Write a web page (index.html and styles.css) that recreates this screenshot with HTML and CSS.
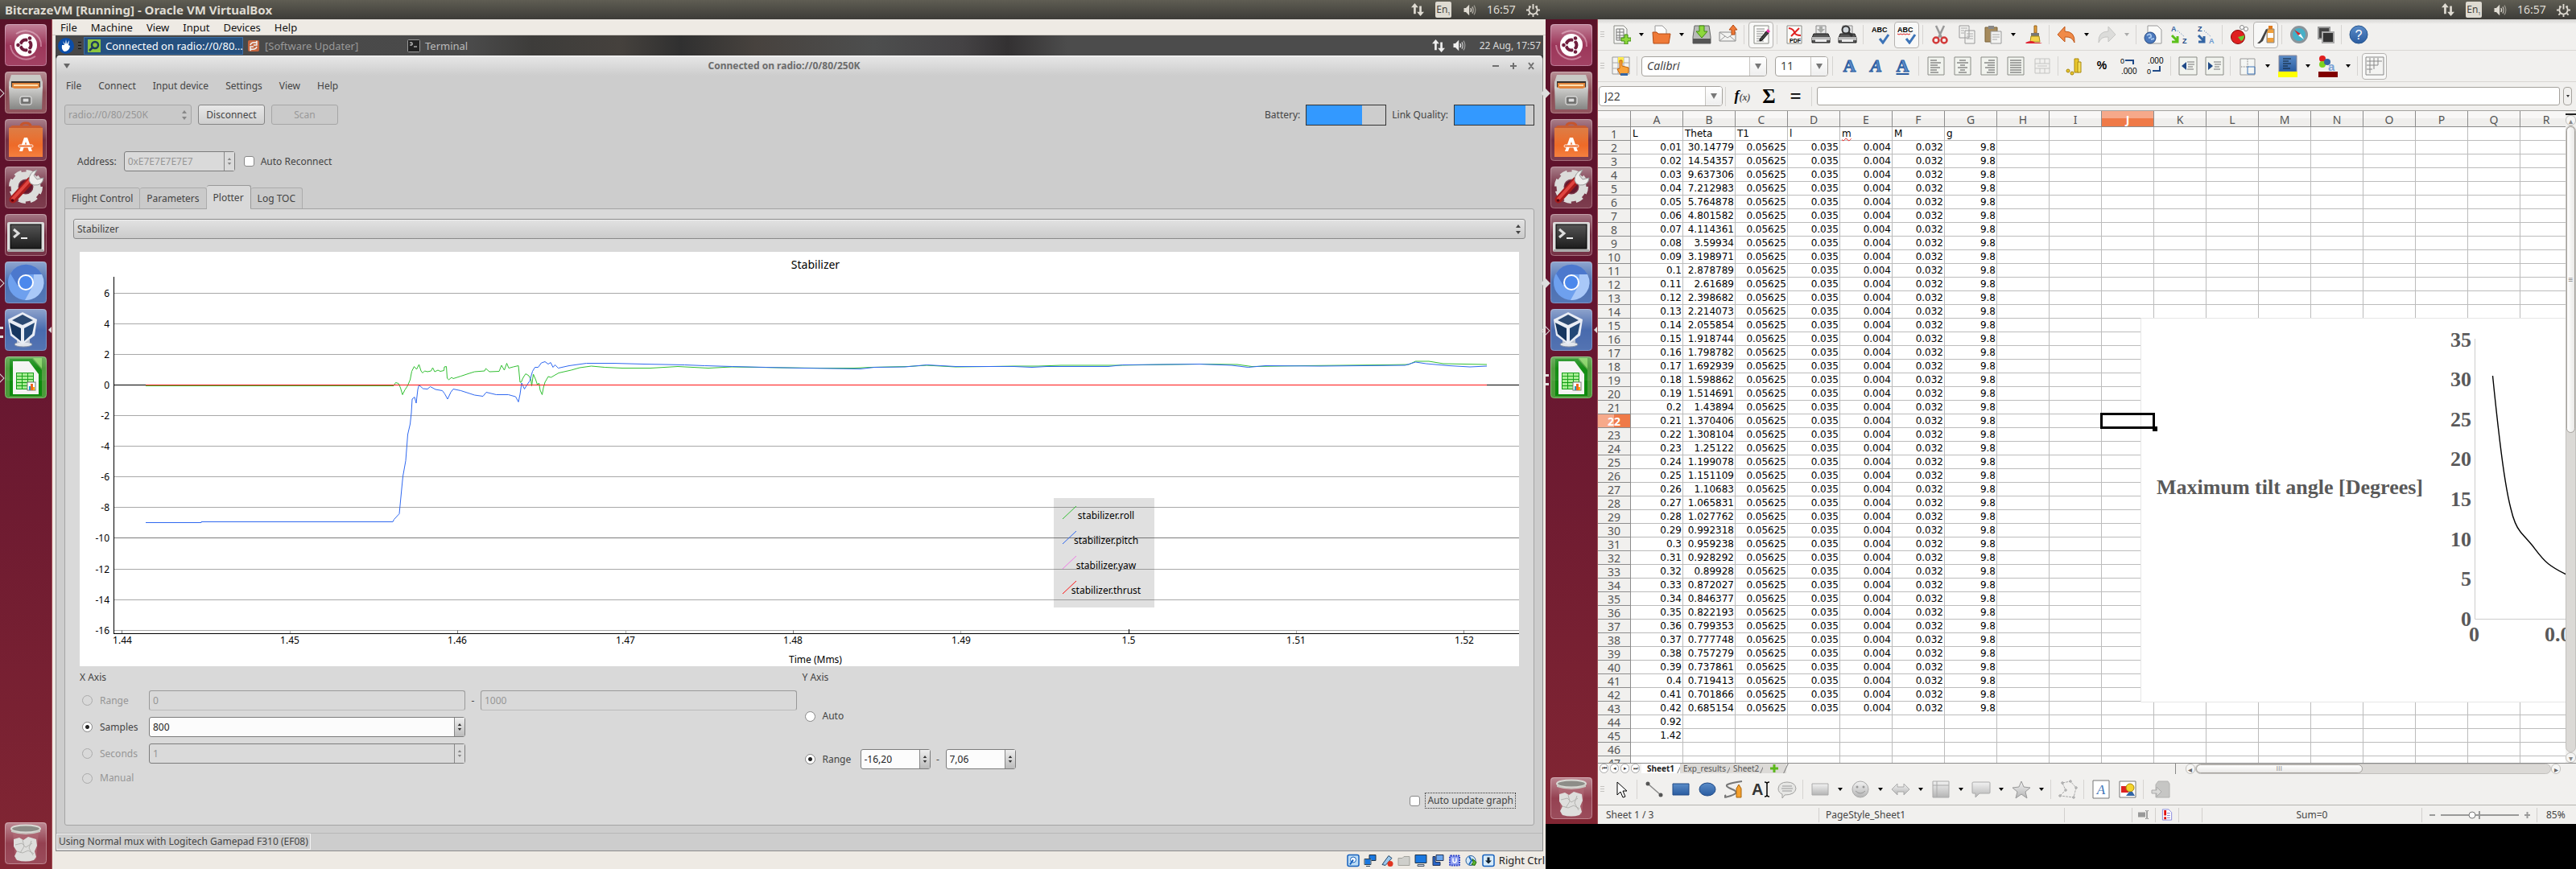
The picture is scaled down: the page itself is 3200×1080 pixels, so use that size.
FILE: index.html
```html
<!DOCTYPE html>
<html lang="en">
<head>
<meta charset="utf-8">
<title>BitcrazeVM [Running] - Oracle VM VirtualBox</title>
<link rel="stylesheet" href="styles.css">
</head>
<body>
<svg class="defs" aria-hidden="true">
  <defs>
    <linearGradient id="gloss" x1="0" y1="0" x2="0" y2="1"><stop offset="0" stop-color="#fff" stop-opacity=".42"/><stop offset=".5" stop-color="#fff" stop-opacity=".06"/><stop offset="1" stop-color="#fff" stop-opacity=".12"/></linearGradient>
    <linearGradient id="metal" x1="0" y1="0" x2="0" y2="1"><stop offset="0" stop-color="#d5d5d3"/><stop offset="1" stop-color="#858583"/></linearGradient>
    <linearGradient id="bag" x1="0" y1="0" x2="0" y2="1"><stop offset="0" stop-color="#dd7d45"/><stop offset=".6" stop-color="#ee6a28"/><stop offset="1" stop-color="#f5803f"/></linearGradient>
    <linearGradient id="dark" x1="0" y1="0" x2="0" y2="1"><stop offset="0" stop-color="#555"/><stop offset="1" stop-color="#1c1c1c"/></linearGradient>
    <linearGradient id="blue" x1="0" y1="0" x2="0" y2="1"><stop offset="0" stop-color="#5a8cc8"/><stop offset="1" stop-color="#2a5ca0"/></linearGradient>
    <linearGradient id="silver" x1="0" y1="0" x2="0" y2="1"><stop offset="0" stop-color="#f2f2f2"/><stop offset="1" stop-color="#b4b4b4"/></linearGradient>
    <symbol id="ubuntu" viewBox="0 0 52 52"><rect x=".5" y=".5" width="51" height="51" rx="4" fill="#96294f" stroke="#b5698a"/><path d="M14 12c14-9 32 0 31 16M38 40C24 49 8 40 7 26" fill="none" stroke="#c1728f" stroke-width="2"/><rect width="52" height="52" rx="4" fill="url(#gloss)"/><circle cx="26" cy="26" r="14" fill="#fff"/><circle cx="26" cy="26" r="6.500" fill="none" stroke="#6f1c3c" stroke-width="4"/><path d="M26 26h-10M26 26l6-10M26 26l6 10" stroke="#fff" stroke-width="1.500"/><g fill="#6f1c3c" stroke="#fff"><circle cx="16.500" cy="26" r="2.800"/><circle cx="31" cy="17.500" r="2.800"/><circle cx="31" cy="34.500" r="2.800"/></g></symbol>
    <symbol id="files" viewBox="0 0 52 52"><rect x=".5" y=".5" width="51" height="51" rx="4" fill="#84404a" stroke="#a8727a"/><rect width="52" height="52" rx="4" fill="url(#gloss)"/><path d="M8 4h36l3 9v8H5v-8z" fill="#c9c9c6"/><path d="M8 12h36v10H8z" fill="#36302c"/><path d="M9 14h34v8H9z" fill="#e0853c"/><path d="M11 17h30" stroke="#ffe0b0" stroke-width="2"/><path d="M5 18l7 3h28l7-3-1 29H6z" fill="url(#metal)"/><rect x="19" y="31" width="14" height="10" rx="2" fill="#7e7e7c" stroke="#eee"/><rect x="22" y="33" width="8" height="5" fill="#ddd" stroke="#555"/></symbol>
    <symbol id="software" viewBox="0 0 52 52"><rect x=".5" y=".5" width="51" height="51" rx="4" fill="#6c2337" stroke="#9a5c6c"/><rect width="52" height="52" rx="4" fill="url(#gloss)"/><path d="M20 16V9q0-4 6-4t6 4v7" fill="none" stroke="#c5552d" stroke-width="3"/><path d="M5 11h42v36H5z" fill="url(#bag)"/><path d="M5 11h42l-4-3H9z" fill="#c75c32"/><path d="M18 40l6-17h4l6 17h-4l-4-12-4 12z" fill="#fff"/><rect x="17" y="32" width="18" height="3" rx="1.500" fill="#ee6a28" stroke="#fff"/></symbol>
    <symbol id="settings" viewBox="0 0 52 52"><rect x=".5" y=".5" width="51" height="51" rx="4" fill="#6c2337" stroke="#9a5c6c"/><rect width="52" height="52" rx="4" fill="url(#gloss)"/><circle cx="26" cy="25" r="17" fill="none" stroke="#dcdcda" stroke-width="8" stroke-dasharray="8 5.350"/><circle cx="26" cy="25" r="14" fill="none" stroke="#dcdcda" stroke-width="9"/><circle cx="26" cy="25" r="8" fill="#64192e"/><path d="M10 41L32 17" stroke="#a81c1c" stroke-width="9" stroke-linecap="round"/><path d="M10 40L31 17" stroke="#e04540" stroke-width="4" stroke-linecap="round"/><path d="M30 17q0-10 10-13l-4 7 4 5 8-2q-1 10-12 9l-4-2z" fill="#ededeb" stroke="#999"/><circle cx="9.500" cy="42" r="1.800" fill="#501"/></symbol>
    <symbol id="terminal" viewBox="0 0 52 52"><rect x=".5" y=".5" width="51" height="51" rx="4" fill="#64192f" stroke="#9a5c6c"/><rect width="52" height="52" rx="4" fill="url(#gloss)"/><rect x="3" y="10" width="46" height="37" rx="2" fill="#ddd"/><rect x="4" y="44" width="44" height="3" fill="#aaa"/><rect x="7" y="13" width="38" height="30" fill="url(#dark)" stroke="#000"/><path d="M11 19l6 5-6 5" fill="none" stroke="#ddd" stroke-width="3"/><path d="M20 30h8" stroke="#eee" stroke-width="2"/></symbol>
    <symbol id="chromium" viewBox="0 0 52 52"><rect x=".5" y=".5" width="51" height="51" rx="4" fill="#3f66ad" stroke="#6d87bb"/><rect width="52" height="52" rx="4" fill="url(#gloss)"/><circle cx="26" cy="26" r="22" fill="#6ea0ee"/><path d="M7 15A22 22 0 0 1 46 16H26L16 30z" fill="#4c78cd"/><path d="M46 16A22 22 0 0 1 25 48l10-18 1-14z" fill="#a9c8f8"/><circle cx="26" cy="26" r="10" fill="#fff"/><circle cx="26" cy="26" r="8" fill="#4b88ec"/></symbol>
    <symbol id="virtualbox" viewBox="0 0 52 52"><rect x=".5" y=".5" width="51" height="51" rx="4" fill="#3d61a8" stroke="#6d87bb"/><rect width="52" height="52" rx="4" fill="url(#gloss)"/><ellipse cx="23" cy="44" rx="11" ry="3" fill="#e3e6ec" stroke="#8d96a8"/><path d="M15 38h16v4H15z" fill="#b9c1d0"/><path d="M22 4l18 9-3 20-15 11L7 33 4 13z" fill="#e9edf5"/><path d="M22 7l13 7-13 6L9 14z" fill="#2c4a72"/><path d="M6 17l14 7v16L9 31z" fill="#17365f"/><path d="M37 17l-13 7v16l10-9z" fill="#234877"/></symbol>
    <symbol id="calc" viewBox="0 0 52 52"><rect x=".5" y=".5" width="51" height="51" rx="4" fill="#4c9a3a" stroke="#7fbb70"/><path d="M6 3h28l12 14v32H6z" fill="#0d8a0d"/><path d="M35 2h11v13z" fill="#7fd05c"/><path d="M10 6h20l12 16v25H10z" fill="#f4f4f2"/><path d="M14 20h22v21H14z" fill="#0f9d12"/><g fill="#a5ec90"><path d="M15 21h6v3h-6zM22 21h6v3h-6zM29 21h6v3h-6zM15 25h6v3h-6zM22 25h6v3h-6zM29 25h6v3h-6zM15 29h6v3h-6zM22 29h6v3h-6zM29 29h6v3h-6zM15 33h6v3h-6zM22 33h6v3h-6zM15 37h6v3h-6zM22 37h6v3h-6z"/></g><rect x="28" y="32" width="10" height="10" fill="#fff" stroke="#777"/><path d="M30 37h2v5h-2z" fill="#29b"/><path d="M32 34h3v8h-3z" fill="#e62"/><path d="M35 38h2v4h-2z" fill="#fa0"/><rect width="52" height="30" rx="4" fill="url(#gloss)" opacity=".5"/></symbol>
    <symbol id="trash" viewBox="0 0 52 52"><rect x=".5" y=".5" width="51" height="51" rx="4" fill="#8e3546" stroke="#b57480"/><rect width="52" height="52" rx="4" fill="url(#gloss)"/><path d="M10 12l3 34q13 4 26 0l3-34z" fill="#b5717c" opacity=".5"/><path d="M11 21l7-2 5 3 6-4 10 3 1 8-3 7 2 7-3 4q-10 3-21 0l-3-5 3-6-4-6z" fill="#dededc"/><path d="M13 28l8-2 5 5 8-5M15 36l7 2 7-3 7 4M22 22l2 8-5 8M33 23l-3 9 5 9" fill="none" stroke="#b3b3b0"/><ellipse cx="26" cy="8" rx="18" ry="4.500" fill="#8d8d88" stroke="#dadad5" stroke-width="2"/><path d="M8 9q18 9 36 0v3q-18 6-36 0z" fill="#c8c8c2"/></symbol>
    <symbol id="net" viewBox="0 0 18 18"><path d="M5 0L0 6h3.500v9h3V6H10zM13 18l5-6h-3.500V4h-3v8H8z" fill="currentColor"/></symbol>
    <symbol id="sound" viewBox="0 0 20 18"><path d="M1 6h3l5-5v16l-5-5H1z" fill="currentColor"/><path d="M11 6q2 3 0 6" fill="none" stroke="currentColor" stroke-width="1.500"/><path d="M13.500 4q3 5 0 10" fill="none" stroke="currentColor" stroke-width="1.500" opacity=".8"/><path d="M16 2q4.500 7 0 14" fill="none" stroke="currentColor" stroke-width="1.500" opacity=".5"/></symbol>
    <symbol id="gear" viewBox="0 0 18 18"><path d="M6 4.300A5.500 5.500 0 1 0 12 4.300" fill="none" stroke="currentColor" stroke-width="2"/><path d="M9 1v7M3.500 3.500l1.500 1.500M14.500 3.500L13 5M0 9h3M18 9h-3M2.500 15.500l2-2M15.500 15.500l-2-2M9 18v-3" stroke="currentColor" stroke-width="2"/></symbol>
    <symbol id="updown" viewBox="0 0 8 14"><path d="M4 1l3 4H1zM4 13l3-4H1z" fill="currentColor"/></symbol>
    <symbol id="page" viewBox="0 0 24 24"><path d="M3 1h18v22H3z" fill="#fcfcfa" stroke="#8a8c86"/></symbol>
    <symbol id="printer" viewBox="0 0 24 24"><path d="M6 1h12v10H6z" fill="#e9e9e9" stroke="#888"/><path d="M3 11h18l2 5v6H1v-6z" fill="#555" stroke="#222"/><path d="M1 15h22v4H1z" fill="#bbb"/><path d="M5 18h14v3H5z" fill="#eee"/></symbol>
  </defs>
</svg>

<main class="desktop">
<section class="screen">
  <header class="topbar">
    <h1 class="topbar-title">BitcrazeVM [Running] - Oracle VM VirtualBox</h1>
    <div class="indicators">
      <svg class="i-net"><use href="#net"/></svg><span class="lang">En<sub>1</sub></span><svg class="i-sound"><use href="#sound"/></svg><time>16:57</time><svg class="i-gear"><use href="#gear"/></svg>
    </div>
  </header>
  <div class="workspace">
    <nav class="launcher" aria-label="Launcher">
      <a href="#" class="tile" aria-label="Dash"><svg><use href="#ubuntu"/></svg></a>
      <a href="#" class="tile hollow" aria-label="Files"><svg><use href="#files"/></svg></a>
      <a href="#" class="tile" aria-label="Ubuntu Software"><svg><use href="#software"/></svg></a>
      <a href="#" class="tile" aria-label="System Settings"><svg><use href="#settings"/></svg></a>
      <a href="#" class="tile" aria-label="Terminal"><svg><use href="#terminal"/></svg></a>
      <a href="#" class="tile hollow" aria-label="Chromium"><svg><use href="#chromium"/></svg></a>
      <a href="#" class="tile pips active" aria-label="VirtualBox"><svg><use href="#virtualbox"/></svg></a>
      <a href="#" class="tile hollow" aria-label="LibreOffice Calc"><svg><use href="#calc"/></svg></a>
      <a href="#" class="tile last" aria-label="Trash"><svg><use href="#trash"/></svg></a>
    </nav>
    <div class="vbox">
      <nav class="vbox-menu"><a href="#">File</a><a href="#">Machine</a><a href="#">View</a><a href="#">Input</a><a href="#">Devices</a><a href="#">Help</a></nav>
      <div class="guest">
        <div class="panel-bar">
          <svg class="mouse" viewBox="0 0 20 20"><circle cx="10" cy="10" r="10" fill="#0b4da8"/><path d="M5 9l3 0-2-5 3 4 1-6 1 6 3-5-1 6 2 1q-1 7-7 7Q4 15 5 9" fill="#fff"/></svg>
          <svg class="grip" viewBox="0 0 4 9"><path d="M0 .5h4M0 4.500h4M0 8.500h4" stroke="#111"/></svg>
          <button class="task task-on"><svg viewBox="0 0 16 16"><path d="M0 0h16v16H0z" fill="#8cc63f"/><circle cx="9" cy="7" r="4" fill="none" stroke="#1e3c5c" stroke-width="2.500"/><path d="M7 9l-5 5" stroke="#1e3c5c" stroke-width="2.500"/></svg>Connected on radio://0/80...</button>
          <button class="task task-idle"><svg viewBox="0 0 16 16"><rect x="1" y="1" width="14" height="14" rx="2" fill="#c4653f"/><path d="M4 7q1-4 7-3l1-2v5H8M12 9q-1 4-7 3l-1 2V9h4" fill="none" stroke="#eee" stroke-width="1.500"/></svg>[Software Updater]</button>
          <button class="task"><svg viewBox="0 0 16 16"><rect x=".5" y=".5" width="15" height="15" rx="1" fill="#222" stroke="#999"/><path d="M3 4h3v3H3M8 9h4" stroke="#eee" fill="none"/></svg>Terminal</button>
          <div class="tray"><svg class="i-net"><use href="#net"/></svg><svg class="i-sound"><use href="#sound"/></svg><time>22 Aug, 17:57</time></div>
        </div>
        <article class="client">
          <header class="client-title"><svg class="roll" viewBox="0 0 8 6"><path d="M0 0h8L4 6z" fill="#666"/></svg><h2>Connected on radio://0/80/250K</h2>
            <svg class="winbtns" viewBox="0 0 54 12"><path d="M1 6h8M23 6h8M27 2v8M46 2l6 8M52 2l-6 8" stroke="#707070" stroke-width="2" fill="none"/></svg></header>
          <nav class="client-menu"><a href="#">File</a><a href="#">Connect</a><a href="#">Input device</a><a href="#">Settings</a><a href="#">View</a><a href="#">Help</a></nav>
          <div class="connect-row">
            <div class="combo combo-uri off"><select aria-label="Interface" disabled><option>radio://0/80/250K</option></select><svg class="arrows"><use href="#updown"/></svg></div>
            <button class="btn">Disconnect</button><button class="btn" disabled>Scan</button>
            <div class="meters">
              <label for="bat">Battery:</label><div class="meter" id="bat" role="meter" aria-valuenow="70"><div class="fill" style="width:70%"></div></div>
              <label for="lq">Link Quality:</label><div class="meter" id="lq" role="meter" aria-valuenow="90"><div class="fill" style="width:90%"></div></div>
            </div>
          </div>
          <div class="address-row">
            <label for="addr">Address:</label>
            <div class="spin spin-addr off"><input id="addr" value="0xE7E7E7E7E7" disabled><svg><use href="#updown"/></svg></div>
            <label class="check"><input type="checkbox">Auto Reconnect</label>
          </div>
          <div class="tabs" role="tablist"><button class="tab" role="tab">Flight Control</button><button class="tab" role="tab">Parameters</button><button class="tab tab-on" role="tab" aria-selected="true">Plotter</button><button class="tab" role="tab">Log TOC</button></div>
          <div class="page">
            <div class="combo"><select aria-label="Log configuration"><option>Stabilizer</option></select><svg class="arrows"><use href="#updown"/></svg></div>
            <div class="page-body">
              <svg class="plot" viewBox="99 313 1788 515" role="img" aria-label="Stabilizer">
                <path d="M99 313h1788v515H99z" fill="#fff"/>
                <g class="gridline"><path d="M142 364.500H1887M142 402.500H1887M142 440.500H1887M142 516.500H1887M142 554.500H1887M142 592.500H1887M142 630.500H1887M142 707.500H1887M142 745.500H1887M142 783.500H1887M360.500 783v5M777.500 783v5M1193.500 783v5M1610.500 783v5"/><path class="gridline-strong" d="M142 668.500H1887M151.500 783v5M568.500 783v5M985.500 783v5M1818.500 783v5"/></g>
                <path class="axis" d="M141.500 344V788M141 787.500H1887M141 478.500H1887M1402.500 782v6"/>
                <path class="roll-line" d="M181 479.500H489L491.500 475.500 495 476.500 497.500 482 500 490.500 503 484.500 506 480 509.500 472 511.500 461.500 514.500 455.500 517.500 459 520.500 453 523 461 525 463.500 527.500 461 531 462 535.500 461 537.500 457 540 462 544 460 547 461.500 551.500 460.500 552 456 554.500 455.500 555.500 470 557.500 472 561 469 563 470.500 572.500 467.500 583 464 589.500 462 602 461 603.500 458 608 462 620 461.500 623 454 626.500 460 629.500 451.500 632 457.500 637.500 456 644 454.500 646 475 647.500 475 649.500 470 653 464.500 657 467 659.500 472 660.500 479.500 662.500 465 665.500 472 667.500 478 669.500 476 671 485 673.500 490.500 675 482 677 475 681 468 684.500 469 694 463.500 709.500 460 720 457 734.500 455 751.500 456.500 773 457.500 808 457.500 842 455.500 880 457.500 909 456 943 456.500 972 457 1018 457.500 1061 457.500 1082 456.500 1128 455.500 1151 454 1187 456 1229 455.500 1260 455 1290 455 1318 454 1390 454 1450 453 1490 452.500 1537 453 1555 455.500 1620 454.500 1719 453.500 1750 453 1758.500 449 1775 449 1793 452 1820 452.500 1847 453"/>
                <path class="pitch-line" d="M181 649.500H250V648.500H488L489.500 645.500 496 638.500 499.500 602 500.500 592 504 572.500 506.500 540 509.500 527 511 513 512 496 515 493.500 517 501 519 484 520.500 478.500 525.500 483 531 483.500 534.500 480.500 541 484 549.500 485.500 552.500 489.500 556 496 560 487.500 563 483.500 572.500 485.500 589.500 491 600 492.500 604 487.500 616.500 490.500 631.500 490.500 640.500 493 644 499.500 646 490 648 476 651.500 483.500 654.500 478.500 658 473.500 661.500 461.500 664.500 456.500 668.500 456.500 672.500 451 677 449.500 681 452.500 684 450.500 687 456.500 689.500 453.500 693.500 457.500 707 454.500 728.500 451.500 762 451.500 800 452.500 850.500 453.500 875.500 454.500 909.500 455.500 951.500 456.500 998 457.500 1069 458.500 1086 456.500 1124 456 1151.500 453.500 1187 455.500 1260 455.500 1282 456.500 1300 455.500 1377 455.500 1394.500 453.500 1490 452.500 1530 454 1550.500 456.500 1572 454.500 1640 455 1745.500 454 1758.500 450 1771.500 452 1800 454.500 1826 456 1847 455"/>
                <path class="thrust-line" d="M181 478.500H1847"/>
                <g class="tick tick-y"><text x="136" y="369">6</text><text x="136" y="407">4</text><text x="136" y="445">2</text><text x="136" y="483">0</text><text x="136" y="521">-2</text><text x="136" y="559">-4</text><text x="136" y="597">-6</text><text x="136" y="635">-8</text><text x="136" y="673">-10</text><text x="136" y="712">-12</text><text x="136" y="750">-14</text><text x="136" y="788">-16</text></g>
                <g class="tick tick-x"><text x="152" y="800">1.44</text><text x="360" y="800">1.45</text><text x="568" y="800">1.46</text><text x="777" y="800">1.47</text><text x="985" y="800">1.48</text><text x="1194" y="800">1.49</text><text x="1402" y="800">1.5</text><text x="1610" y="800">1.51</text><text x="1819" y="800">1.52</text><text x="1013" y="824">Time (Mms)</text><text class="plot-title" x="1013" y="334">Stabilizer</text></g>
                <path d="M1309 619h125v136h-125z" fill="#646464" fill-opacity=".2"/>
                <path class="roll-line" d="M1320 645L1337 629"/><path class="pitch-line" d="M1320 676L1337 660"/><path class="yaw-line" d="M1320 707L1337 691"/><path class="thrust-line" d="M1320 738L1337 722"/>
                <g class="tick tick-x"><text x="1374" y="645">stabilizer.roll</text><text x="1374" y="676">stabilizer.pitch</text><text x="1374" y="707">stabilizer.yaw</text><text x="1374" y="738">stabilizer.thrust</text></g>
              </svg>
              <div class="axes">
                <fieldset class="axis-group" disabled>
                  <legend>X Axis</legend>
                  <div class="axis-row"><label class="radio off"><input type="radio" name="x">Range</label><input class="field x-main off" aria-label="From" value="0"><span class="dash">-</span><input class="field grow off" aria-label="To" value="1000"></div>
                  <div class="axis-row"><label class="radio"><input type="radio" name="x" checked>Samples</label><div class="spin x-main"><input aria-label="Samples" value="800"><svg><use href="#updown"/></svg></div></div>
                  <div class="axis-row"><label class="radio off"><input type="radio" name="x">Seconds</label><div class="spin x-main off"><input aria-label="Seconds" value="1"><svg><use href="#updown"/></svg></div></div>
                  <div class="axis-row"><label class="radio off"><input type="radio" name="x">Manual</label></div>
                </fieldset>
                <fieldset class="axis-group axis-y">
                  <legend>Y Axis</legend>
                  <div class="axis-row"><label class="radio"><input type="radio" name="y">Auto</label></div>
                  <div class="axis-row"><label class="radio radio-y"><input type="radio" name="y" checked>Range</label><div class="spin y-main"><input aria-label="Minimum" value="-16,20"><svg><use href="#updown"/></svg></div><span class="dash">-</span><div class="spin y-main"><input aria-label="Maximum" value="7,06"><svg><use href="#updown"/></svg></div></div>
                </fieldset>
              </div>
              <div class="update-row"><label class="check"><input type="checkbox"><span class="focus">Auto update graph</span></label></div>
            </div>
          </div>
          <footer class="client-status"><span>Using Normal mux with Logitech Gamepad F310 (EF08)</span></footer>
        </article>
      </div>
      <footer class="vbox-status">
        <svg viewBox="0 0 16 16"><rect x="1" y="1" width="14" height="14" rx="2" fill="#bcdcf5" stroke="#1560bd" stroke-width="1.500"/><circle cx="8" cy="7" r="3.500" fill="#fff" stroke="#1560bd"/><path d="M8 7l-4 6" stroke="#1560bd" stroke-width="2"/></svg>
        <svg viewBox="0 0 16 16"><path d="M7 1h8v7H7z" fill="#1a78e0" stroke="#234"/><path d="M1 6h8v7H1z" fill="#1a78e0" stroke="#fff"/><path d="M1 6h8v7H1zM3 15h5" fill="none" stroke="#345"/></svg>
        <svg viewBox="0 0 16 16"><path d="M2 13L10 2l4 3-8 9z" fill="#9cc9ee" stroke="#246"/><circle cx="12" cy="12" r="3.500" fill="#e0341f"/></svg>
        <svg viewBox="0 0 16 16"><path d="M1 5h5l2-2h7v11H1z" fill="#cfcfcb" stroke="#a2a29c"/></svg>
        <svg viewBox="0 0 16 16"><path d="M1 1h14v10H1z" fill="#1a78e0" stroke="#234"/><path d="M4 13h8v2H4z" fill="#dde" stroke="#456"/></svg>
        <svg viewBox="0 0 16 16"><path d="M6 1h9v7H6z" fill="#6aa5ee" stroke="#235"/><path d="M2 3v11h9v-4H5V3z" fill="#2a66c8" stroke="#235"/></svg>
        <svg viewBox="0 0 16 16"><rect x="2" y="2" width="12" height="12" rx="1" fill="#8f9ff0" stroke="#3347c8" stroke-width="2" stroke-dasharray="2 1"/><path d="M6 5v4q2 3 4 0V5" fill="none" stroke="#fff" stroke-width="1.500"/></svg>
        <svg viewBox="0 0 16 16"><circle cx="7" cy="8" r="6" fill="#d6e9f8" stroke="#245c9a"/><path d="M5 3l3 5-3 5" stroke="#1c6ac0" stroke-width="2" fill="none"/><path d="M9 6l5 4-2 4-4-1 2-3z" fill="#5cb531" stroke="#261"/></svg>
        <svg viewBox="0 0 16 16"><rect x="1" y="1" width="14" height="14" rx="2" fill="#d8ecfa" stroke="#1560bd" stroke-width="1.500"/><path d="M6.500 4h3v4H12l-4 4-4-4h2.500z" fill="#123"/></svg>
        <span>Right Ctrl</span>
      </footer>
    </div>
  </div>
</section>

<section class="screen screen-right">
  <header class="topbar">
    <div class="indicators">
      <svg class="i-net"><use href="#net"/></svg><span class="lang">En<sub>1</sub></span><svg class="i-sound"><use href="#sound"/></svg><time>16:57</time><svg class="i-gear"><use href="#gear"/></svg>
    </div>
  </header>
  <div class="workspace">
    <nav class="launcher" aria-label="Launcher">
      <a href="#" class="tile" aria-label="Dash"><svg><use href="#ubuntu"/></svg></a>
      <a href="#" class="tile solid" aria-label="Files"><svg><use href="#files"/></svg></a>
      <a href="#" class="tile" aria-label="Ubuntu Software"><svg><use href="#software"/></svg></a>
      <a href="#" class="tile" aria-label="System Settings"><svg><use href="#settings"/></svg></a>
      <a href="#" class="tile" aria-label="Terminal"><svg><use href="#terminal"/></svg></a>
      <a href="#" class="tile solid" aria-label="Chromium"><svg><use href="#chromium"/></svg></a>
      <a href="#" class="tile hollow active" aria-label="VirtualBox"><svg><use href="#virtualbox"/></svg></a>
      <a href="#" class="tile pips" aria-label="LibreOffice Calc"><svg><use href="#calc"/></svg></a>
      <a href="#" class="tile last" aria-label="Trash"><svg><use href="#trash"/></svg></a>
    </nav>
    <div class="office">
      <div class="toolbar">
        <i class="handle"></i>
        <button aria-label="New"><svg viewBox="0 0 24 24"><path d="M3 1h12l4 4v18H3z" fill="#f6f6f4" stroke="#8a8c86"/><path d="M6 5h9v14H6zM6 9h9M6 13h9M6 16h9M10 5v14" fill="none" stroke="#777"/><path d="M16 12h4v4h4v4h-4v4h-4v-4h-4v-4h4z" fill="#8ed83c" stroke="#3e8a10"/></svg></button><b></b>
        <button aria-label="Open"><svg viewBox="0 0 24 24"><path d="M4 1h9l5 5v8H4z" fill="#fbfbfb" stroke="#999"/><path d="M1 9h5l2 2h15l-2 12H2z" fill="#ef7a38" stroke="#b44a12"/></svg></button><b></b>
        <button aria-label="Save"><svg viewBox="0 0 24 24"><path d="M3 1h18l2 14v8H1v-8z" fill="#b9bbb8" stroke="#666"/><path d="M1 17h22v6H1z" fill="#555"/><path d="M9 1h6v7h4l-7 8-7-8h4z" fill="#8ed83c" stroke="#3e8a10"/></svg></button>
        <button aria-label="Email"><svg viewBox="0 0 24 24"><path d="M1 9h20v11H1z" fill="#f3f3f1" stroke="#888"/><path d="M1 9l10 7 10-7M1 20l7-6M21 20l-7-6" fill="none" stroke="#999"/><path d="M16 12V6h-3l5-6 5 6h-3v6z" fill="#ef7a38" stroke="#b44a12"/></svg></button><s></s>
        <button class="on" aria-label="Edit mode"><svg viewBox="0 0 24 24"><use href="#page"/><path d="M6 5h10M6 8h10M6 11h8M6 14h7M6 17h6M6 20h9" stroke="#888"/><path d="M10 18l8-10 3 2-8 9-3 1z" fill="#444" stroke="#111"/><path d="M18 8l3 2 2-2-3-3z" fill="#e3a"/></svg></button><s></s>
        <button aria-label="Export as PDF"><svg viewBox="0 0 24 24"><use href="#page"/><path d="M5 4q6 1 7 5t8 4M18 4L8 14" stroke="#e02020" stroke-width="2" fill="none"/><text x="6" y="22" font-size="7" font-weight="700">PDF</text></svg></button>
        <button aria-label="Print"><svg viewBox="0 0 24 24"><use href="#printer"/><path d="M10 2h4v3h3l-5 5-5-5h3z" fill="#a9aba8"/></svg></button>
        <button aria-label="Print preview"><svg viewBox="0 0 24 24"><use href="#printer"/><circle cx="10" cy="6" r="4.500" fill="#cfd5da" stroke="#333" stroke-width="2"/><path d="M13 9l5 5" stroke="#333" stroke-width="3"/></svg></button><s></s>
        <button aria-label="Spelling"><svg viewBox="0 0 24 24"><text x="1" y="9" font-size="9" font-weight="700">ABC</text><path d="M11 17l4 5 7-10" fill="none" stroke="#3d74b8" stroke-width="3"/></svg></button>
        <button class="on" aria-label="Automatic spellcheck"><svg viewBox="0 0 24 24"><text x="0" y="9" font-size="9" font-weight="700">ABC</text><path d="M0 11l2 1 2-1 2 1 2-1 2 1 2-1 2 1 2-1" fill="none" stroke="#d22"/><path d="M11 17l4 5 7-10" fill="none" stroke="#3d74b8" stroke-width="3"/></svg></button><s></s>
        <button aria-label="Cut"><svg viewBox="0 0 24 24"><path d="M7 1l7 15M17 1l-7 15" stroke="#999" stroke-width="2.500"/><circle cx="7" cy="19" r="3.500" fill="none" stroke="#d23a3a" stroke-width="2.500"/><circle cx="17" cy="19" r="3.500" fill="none" stroke="#d23a3a" stroke-width="2.500"/></svg></button>
        <button aria-label="Copy"><svg viewBox="0 0 24 24"><path d="M3 1h12v15H3zM10 7h12v16H10z" fill="#f3f3f1" stroke="#999"/><path d="M12 11h8M12 14h8M12 17h8M5 4h8M5 7h4M5 10h4" stroke="#aaa"/></svg></button>
        <button aria-label="Paste"><svg viewBox="0 0 24 24"><path d="M2 3h15v18H2z" fill="#a58a5c" stroke="#7a6238"/><path d="M6 1h7v4H6z" fill="#888"/><path d="M9 8h13v15H9z" fill="#f3f3f1" stroke="#999"/><path d="M11 12h9M11 15h9M11 18h6" stroke="#aaa"/></svg></button><b></b>
        <button aria-label="Clone formatting"><svg viewBox="0 0 24 24"><path d="M13 1h3v9h-3z" fill="#e8a33c" stroke="#94601a"/><path d="M9 10h10v4H9z" fill="#777"/><path d="M9 14h10l1 7H8z" fill="#f3d34a" stroke="#a68a18"/><path d="M2 22q8-4 12 0h9l-3 1H3z" fill="#e02030"/></svg></button><s></s>
        <button aria-label="Undo"><svg viewBox="0 0 24 24"><path d="M10 2v6q13 0 12 14-3-8-12-7v6L1 12z" fill="#f08a48" stroke="#c05a1c"/></svg></button><b></b>
        <button aria-label="Redo"><svg viewBox="0 0 24 24"><path d="M14 2v6Q1 8 2 22q3-8 12-7v6l9-9z" fill="#dcdcda" stroke="#c6c6c4"/></svg></button><b class="dim"></b><s></s>
        <button aria-label="Hyperlink"><svg viewBox="0 0 24 24"><path d="M5 1h12l5 5v17H5z" fill="#fafaf8" stroke="#999"/><circle cx="8" cy="16" r="7" fill="#4b79bd" stroke="#254a85"/><path d="M4 13q4-3 5 0t-3 3M9 18l4-1" stroke="#a5c6ee" stroke-width="2" fill="none"/></svg></button>
        <button aria-label="Sort ascending"><svg viewBox="0 0 24 24"><text x="1" y="8" font-size="9" font-weight="700" fill="#3465a4">A</text><text x="15" y="23" font-size="9" font-weight="700" fill="#204a87">Z</text><path d="M9 7l9 8" stroke="#3465a4" stroke-dasharray="1 2"/><path d="M2 13l6 6M9 14v7H2" stroke="#5cc01a" stroke-width="3" fill="none"/></svg></button>
        <button aria-label="Sort descending"><svg viewBox="0 0 24 24"><text x="1" y="8" font-size="9" font-weight="700" fill="#204a87">Z</text><text x="15" y="23" font-size="9" font-weight="700" fill="#6c9ad0">A</text><path d="M9 7l9 8" stroke="#3465a4" stroke-dasharray="1 2"/><path d="M2 13l6 6M9 14v7H2" stroke="#3465a4" stroke-width="3" fill="none"/></svg></button><s></s>
        <button aria-label="Chart"><svg viewBox="0 0 24 24"><circle cx="10" cy="15" r="8.500" fill="#e02020" stroke="#8a0a0a"/><path d="M10 15l8-2q0 5-4 7z" fill="#6c3"/><circle cx="15" cy="3" r="2.500" fill="#fff" stroke="#888"/><circle cx="20" cy="5" r="2.500" fill="#fff" stroke="#888"/></svg></button>
        <button class="on" aria-label="Gallery"><svg viewBox="0 0 24 24"><path d="M13 5h9v17h-9z" fill="#f1a03a" stroke="#888"/><path d="M14 10h7v6h-7z" fill="#fff"/><path d="M15 1h5v4h-5z" fill="#e07a1c"/><path d="M1 23l4-4 7-14 2 1-6 14-4 3z" fill="#444"/></svg></button><s></s>
        <button aria-label="Navigator"><svg viewBox="0 0 24 24"><circle cx="12" cy="12" r="9.500" fill="#45b0c8" stroke="#8b949a" stroke-width="3"/><path d="M6 6l8 5-3 2z" fill="#d22"/><path d="M18 18l-7-5 3-2z" fill="#fff"/></svg></button>
        <button aria-label="Headers"><svg viewBox="0 0 24 24"><path d="M3 3h14v14H3z" fill="#444" stroke="#999" stroke-width="2"/><path d="M8 9h14v13H8z" fill="#333" stroke="#aaa" stroke-width="2"/></svg></button><s></s>
        <button aria-label="Help"><svg viewBox="0 0 24 24"><circle cx="12" cy="12" r="11" fill="url(#blue)" stroke="#27568f"/><text x="12" y="18" font-size="16" text-anchor="middle" fill="#fff">?</text></svg></button>
      </div>
      <div class="toolbar">
        <i class="handle"></i>
        <button aria-label="Styles"><svg viewBox="0 0 24 24"><path d="M1 1h21v21H1z" fill="#f4f4f2" stroke="#999"/><path d="M1 8h21M1 15h21M8 1v21M15 1v21" stroke="#aaa"/><path d="M8 1h7v7H8z" fill="#fce94f"/><path d="M10 5h3v7l8 2v6l-3 3h-7l-4-7 3-1z" fill="#f9a33a" stroke="#c2630a"/><path d="M11 21h9v3h-9z" fill="#3465a4"/></svg></button><s></s>
        <div class="cbx cbx-font"><input aria-label="Font name" value="Calibri"><button aria-label="Fonts"></button></div>
        <div class="cbx cbx-size"><input aria-label="Font size" value="11"><button aria-label="Sizes"></button></div><s></s>
        <button class="letter" aria-label="Bold"><span>A</span></button><button class="letter" aria-label="Italic"><em>A</em></button><button class="letter" aria-label="Underline"><u>A</u></button><s></s>
        <button aria-label="Align left"><svg viewBox="0 0 24 24"><path d="M2 1h20v22H2z" fill="#f1f3ee" stroke="#8a8c86"/><path d="M5 5h8M5 8h13M5 11h9M5 14h12M5 17h8M5 20h10" stroke="#555"/></svg></button>
        <button aria-label="Center"><svg viewBox="0 0 24 24"><path d="M2 1h20v22H2z" fill="#f1f3ee" stroke="#8a8c86"/><path d="M8 5h8M5 8h14M9 11h6M6 14h12M9 17h6M7 20h10" stroke="#555"/></svg></button>
        <button aria-label="Align right"><svg viewBox="0 0 24 24"><path d="M2 1h20v22H2z" fill="#f1f3ee" stroke="#8a8c86"/><path d="M11 5h8M6 8h13M10 11h9M7 14h12M11 17h8M9 20h10" stroke="#555"/></svg></button>
        <button aria-label="Justify"><svg viewBox="0 0 24 24"><path d="M2 1h20v22H2z" fill="#f1f3ee" stroke="#8a8c86"/><path d="M5 5h14M5 8h14M5 11h14M5 14h14M5 17h14M5 20h14" stroke="#555"/></svg></button>
        <button aria-label="Merge cells"><svg viewBox="0 0 24 24"><path d="M3 3h18v18H3zM3 9h18M3 15h18M9 3v6M15 3v6M9 15v6M15 15v6M6 12h12" fill="none" stroke="#c4c4c2"/></svg></button><s></s>
        <button aria-label="Currency"><svg viewBox="0 0 24 24"><path d="M11 3h5v17h-5z" fill="#e9c72c" stroke="#a8860c"/><path d="M15 7h4v13h-4z" fill="#f5df5a" stroke="#a8860c"/><circle cx="3" cy="18" r="2" fill="#e9c72c" stroke="#a8860c"/><circle cx="8" cy="21" r="2" fill="#e9c72c" stroke="#a8860c"/></svg></button>
        <button aria-label="Percent"><svg viewBox="0 0 24 24"><text x="12" y="16" font-size="14" font-weight="700" text-anchor="middle">%</text></svg></button>
        <button aria-label="Add decimal"><svg viewBox="0 0 24 24"><text x="2" y="9" font-size="9">0</text><text x="3" y="22" font-size="10">.000</text><path d="M8 5h10v5" fill="none" stroke="#204a87" stroke-width="2"/></svg></button>
        <button aria-label="Remove decimal"><svg viewBox="0 0 24 24"><text x="3" y="9" font-size="10">.000</text><text x="2" y="22" font-size="9">0</text><path d="M18 12v6H9" fill="none" stroke="#204a87" stroke-width="2"/></svg></button><s></s>
        <button aria-label="Decrease indent"><svg viewBox="0 0 24 24"><path d="M1 1h22v22H1z" fill="#f1f3ee" stroke="#8a8c86"/><path d="M10 7l-6 5 6 5z" fill="#204a87"/><path d="M11 7h9M12 10h8M12 13h6M11 16h8" stroke="#777"/></svg></button>
        <button aria-label="Increase indent"><svg viewBox="0 0 24 24"><path d="M1 1h22v22H1z" fill="#f1f3ee" stroke="#8a8c86"/><path d="M4 7l6 5-6 5z" fill="#204a87"/><path d="M11 7h9M12 10h8M12 13h6M11 16h8" stroke="#777"/></svg></button><s></s>
        <button aria-label="Borders"><svg viewBox="0 0 24 24"><path d="M3 3h18v20H3z" fill="#f4f6f4" stroke="#999"/><path d="M12 4v10M4 13h9" stroke="#777" stroke-dasharray="1 1"/><path d="M12 13h9v9h-9z" fill="none" stroke="#3d74b8"/></svg></button><b></b>
        <button aria-label="Background color"><svg viewBox="0 0 24 28"><path d="M1 1h22v20H1z" fill="url(#blue)" stroke="#889"/><path d="M6 5h10M6 8h7M6 11h10M6 14h6M6 17h9" stroke="#123"/><path d="M0 21h24v7H0z" fill="#ff0"/></svg></button><b></b>
        <button aria-label="Font color"><svg viewBox="0 0 24 28"><circle cx="5" cy="5" r="4" fill="#e02020"/><circle cx="5" cy="12" r="4" fill="#7ed321"/><circle cx="11" cy="9" r="4" fill="#3465a4"/><text x="12" y="20" font-size="15" font-weight="700" fill="#7aa2d6">a</text><path d="M0 21h24v7H0z" fill="#800000"/></svg></button><b></b><s></s>
        <button class="on" aria-label="Grid lines"><svg viewBox="0 0 24 24"><path d="M1 1h22v22H1z" fill="#f4f4f2" stroke="#888"/><path d="M2 6h19M2 11h14M2 16h7M6 2v19M11 2v14M16 2v9" stroke="#888"/></svg></button>
      </div>
      <div class="formula">
        <div class="cbx cbx-name"><input aria-label="Name box" value="J22"><button aria-label="Names"></button></div><s></s>
        <button class="fx" aria-label="Function wizard"><em>f</em><small>(x)</small></button><button class="sigma" aria-label="Sum">Σ</button><button class="sigma" aria-label="Formula">=</button><s></s>
        <input class="formula-line" aria-label="Input line"><button class="expand" aria-label="Expand formula bar"></button>
      </div>
      <div class="sheet">
        <div class="grid">
          <table><thead></thead><tbody></tbody></table>
          <div class="chart">
            <svg viewBox="2659 395 528 478" width="528" height="478" role="img" aria-label="Maximum tilt angle">
              <path d="M2659.500 395.500h600v477h-600z" fill="#fff" stroke="#e6e6e6"/>
              <path d="M3074.500 421V769.500H3188" fill="none" stroke="#ccc"/>
              <path d="M3096.500 467C3099 492 3102 520 3105 545S3112 605 3119 632C3122 645 3126 655 3131 661C3135 666 3140 671 3145 677S3157 694 3166 701S3180 710 3190 715" fill="none" stroke="#000" stroke-width="1.400"/>
              <g class="chart-text"><text x="3070" y="431">35</text><text x="3070" y="480">30</text><text x="3070" y="530">25</text><text x="3070" y="579">20</text><text x="3070" y="629">15</text><text x="3070" y="679">10</text><text x="3070" y="728">5</text><text x="3070" y="778">0</text><text x="3080" y="797">0</text><text x="3010" y="614">Maximum tilt angle [Degrees]</text></g>
              <text class="chart-text chart-start" x="3161" y="797">0.05</text>
            </svg>
          </div>
          <div class="cursor"></div>
        </div>
        <div class="vscroll"><i class="split"></i><button aria-label="Scroll up">▴</button><div class="vtrack"><div class="vthumb">≡</div></div><button aria-label="Scroll down">▾</button></div>
      </div>
      <div class="sheet-tabs">
        <div class="tab-nav"><button aria-label="First sheet">⏮</button><button aria-label="Previous sheet">◂</button><button aria-label="Next sheet">▸</button><button aria-label="Last sheet">⏭</button></div>
        <div class="tab-list"><button class="stab stab-on">Sheet1</button><button class="stab">Exp_results</button><button class="stab">Sheet2</button><button class="stab stab-add" aria-label="Add sheet"><svg viewBox="0 0 10 10"><path d="M3.500 0h3v3.500H10v3H6.500V10h-3V6.500H0v-3h3.500z" fill="#5cb81c"/></svg></button></div>
        <div class="hscroll"><button aria-label="Scroll left">◂</button><div class="htrack"><div class="hthumb">ııı</div></div><button aria-label="Scroll right">▸</button></div>
      </div>
      <div class="toolbar drawbar">
        <i class="handle"></i>
        <button aria-label="Select"><svg viewBox="0 0 24 24"><path d="M7 3v16l4-4 3 7 3-1-3-7h5z" fill="#fff" stroke="#000"/></svg></button><s></s>
        <button aria-label="Line"><svg viewBox="0 0 24 24"><path d="M4 5l16 14" stroke="#888" stroke-width="1.500"/><circle cx="4" cy="5" r="2.500" fill="#555"/><circle cx="20" cy="19" r="2.500" fill="#555"/></svg></button>
        <button aria-label="Rectangle"><svg viewBox="0 0 24 24"><path d="M2 5h20v14H2z" fill="url(#blue)" stroke="#204a87"/></svg></button>
        <button aria-label="Ellipse"><svg viewBox="0 0 24 24"><ellipse cx="12" cy="12" rx="10" ry="8" fill="url(#blue)" stroke="#204a87"/></svg></button>
        <button aria-label="Freeform"><svg viewBox="0 0 24 24"><path d="M22 2q-14 2-18 4t6 6-2 8-6-1" fill="none" stroke="#777" stroke-width="2"/><path d="M15 22V11l3-5 3 5v11z" fill="#f5a02c" stroke="#a8650c"/></svg></button>
        <button aria-label="Text"><svg viewBox="0 0 24 24"><text x="1" y="19" font-size="20" font-weight="700" fill="#333">A</text><path d="M17 3q3 0 3 2v14q0 2-3 2M23 3q-3 0-3 2v14q0 2 3 2" fill="none" stroke="#000" stroke-width="1.500"/></svg></button>
        <button aria-label="Callout"><svg viewBox="0 0 24 24"><path d="M9 19L6 23v-5Q1 16 1 11q1-8 11-8t11 8q-1 8-14 8z" fill="#e6e6e4" stroke="#a2a2a0"/><path d="M6 8h12M5 11h14M6 14h12" stroke="#999"/></svg></button><s></s>
        <button aria-label="Basic shapes"><svg viewBox="0 0 24 24"><path d="M2 5h20v14H2z" fill="url(#silver)" stroke="#aaa"/></svg></button><b></b>
        <button aria-label="Symbol shapes"><svg viewBox="0 0 24 24"><circle cx="12" cy="12" r="10" fill="url(#silver)" stroke="#aaa"/><circle cx="8" cy="9" r="1.500" fill="#999"/><circle cx="16" cy="9" r="1.500" fill="#999"/><path d="M6 14q6 6 12 0" fill="none" stroke="#999"/></svg></button><b></b>
        <button aria-label="Block arrows"><svg viewBox="0 0 24 24"><path d="M1 12l7-7v4h8V5l7 7-7 7v-4H8v4z" fill="url(#silver)" stroke="#aaa"/></svg></button><b></b>
        <button aria-label="Flowchart"><svg viewBox="0 0 24 24"><path d="M2 2h20v20H2z" fill="url(#silver)" stroke="#aaa"/><path d="M7 2v20M2 7h20" stroke="#aaa"/></svg></button><b></b>
        <button aria-label="Callouts"><svg viewBox="0 0 24 24"><path d="M3 3h19q1 0 1 1v12q0 1-1 1H10l-5 5v-5H2q-1 0-1-1V4q0-1 2-1z" fill="url(#silver)" stroke="#aaa"/></svg></button><b></b>
        <button aria-label="Stars"><svg viewBox="0 0 24 24"><path d="M12 2l3 7 8 1-6 5 2 8-7-5-7 5 2-8-6-5 8-1z" fill="url(#silver)" stroke="#999"/></svg></button><b></b><s></s>
        <button aria-label="Points"><svg viewBox="0 0 24 24"><path d="M2 20l7-7-4-9 10-2 7 8-3 12z" fill="none" stroke="#aaa" stroke-dasharray="3 1"/><path d="M1 19h2v2H1zM8 12h2v2H8zM4 3h2v2H4zM14 1h2v2h-2zM21 9h2v2h-2zM18 21h2v2h-2z" fill="#fff" stroke="#999"/></svg></button><s></s>
        <button aria-label="Fontwork"><svg viewBox="0 0 24 24"><path d="M2 1h20v22H2z" fill="#fff" stroke="#777"/><text x="12" y="18" font-size="17" font-style="italic" text-anchor="middle" font-family="Liberation Serif, serif" fill="#3d74b8">A</text></svg></button>
        <button aria-label="From file"><svg viewBox="0 0 24 24"><path d="M2 2h20v20H2z" fill="#fff" stroke="#777"/><path d="M4 8h9v8H4z" fill="#d22"/><circle cx="15" cy="10" r="5" fill="#f5d52c" stroke="#a8860c"/><path d="M10 20l4-5h4l3 5z" fill="#3465a4"/></svg></button><s></s>
        <button aria-label="Extrusion"><svg viewBox="0 0 24 24"><path d="M6 6l3-4h12l2 3v17H6z" fill="#c6c6c4" stroke="#b2b2b0"/><path d="M1 13h6v-4l6 6-6 6v-4H1z" fill="#d9d9d7" stroke="#aaa"/></svg></button>
      </div>
      <footer class="office-status">
        <span class="st-sheet">Sheet 1 / 3</span><span class="st-style">PageStyle_Sheet1</span><span class="st-lang"></span><span class="st-icon"><svg viewBox="0 0 14 14"><path d="M0 4h9v6H0z" fill="#999"/><path d="M9 2q2 0 2 1v8q0 1-2 1M13 2q-2 0-2 1v8q0 1 2 1" fill="none" stroke="#888"/></svg></span><span class="st-icon"><svg viewBox="0 0 14 16"><path d="M1 1h8l4 4v10H1z" fill="#fff" stroke="#88d"/><path d="M7 6h4M7 9h4M7 12h4" stroke="#77c"/><path d="M3 2h3v7H3zM3 11h3v3H3z" fill="#e01010"/></svg></span><span class="st-sign"></span><span class="st-sum">Sum=0</span>
        <span class="st-zoom"><svg viewBox="0 0 126 12"><path d="M1 6h7M15 6h97M119 6h7M122.500 2v8M63 1v10" stroke="#999" stroke-width="2"/><circle cx="54" cy="6" r="4" fill="#fff" stroke="#777"/></svg></span><span class="st-pct">85%</span>
      </footer>
    </div>
  </div>
</section>
</main>
<script src="sheet.js"></script>
</body>
</html>
```
FILE: styles.css
```css
* { box-sizing: border-box; }
body { margin: 0; background: #000; font: 13px/16px "Noto Sans", "Open Sans", sans-serif; color: #222; }
h1, h2 { margin: 0; font-size: inherit; }
a { color: inherit; text-decoration: none; }
button, input, select { font: inherit; color: inherit; margin: 0; padding: 0; border: 0; background: none; min-width: 0; outline: 0; }
svg { display: block; flex: none; }
.defs { position: absolute; width: 0; height: 0; }

.desktop { display: flex; height: 100vh; overflow: hidden; }
.screen { flex: 3; min-width: 0; display: flex; flex-direction: column; }
.screen-right { flex: 2; height: calc(100vh - 56px); }
.topbar { height: 24px; flex: none; display: flex; align-items: center; padding: 0 7px 0 6px; background: linear-gradient(#5f5d53, #3d3c38); color: #dfdbd2; }
.topbar-title { font-size: 15px; }
.indicators { margin-left: auto; display: flex; align-items: center; }
.indicators time { margin: 0 12px 0 11px; width: 37px; font-size: 14px; }
.i-net { width: 18px; height: 16px; }
.i-sound { width: 20px; height: 15px; }
.i-gear { width: 17px; height: 17px; }
.lang { width: 20px; height: 20px; margin: 0 13px; border-radius: 2px; background: #dfdbd2; color: #44423c; font-size: 12px; line-height: 20px; text-align: center; }
.lang sub { font-size: 6px; }
.workspace { flex: 1; min-height: 0; display: flex; }

.launcher { width: 65px; flex: none; display: flex; flex-direction: column; gap: 7px; padding: 6px 6px 6px 0; background: linear-gradient(#5a1128, #641530 35%, #822633); border-right: 1px solid #a34f55; }
.tile { position: relative; display: block; width: 58px; height: 52px; padding-left: 6px; }
.tile svg { width: 52px; height: 52px; }
.last { margin-top: auto; }
.hollow::before, .solid::before { content: ""; position: absolute; left: -4px; top: 23px; width: 6px; height: 6px; border: 1px solid #ddd; transform: rotate(45deg); }
.solid::before { background: #ddd; }
.pips::before { content: ""; position: absolute; left: 0; top: 22px; width: 4px; height: 8px; border: solid #ddd; border-width: 3px 0; }
.active::after { content: ""; position: absolute; right: -6px; top: 22px; border: 4px solid transparent; border-right-color: #ddd; border-left: 0; }

.vbox { flex: 1; min-width: 0; display: flex; flex-direction: column; background: #eeeae4; }
.vbox-menu { height: 20px; flex: none; display: flex; align-items: center; gap: 17px; padding-left: 10px; border-bottom: 1px solid #cfcbc4; color: #111; }
.guest { flex: 1; min-height: 0; margin: 0 3px 0 4px; display: flex; flex-direction: column; background: #2e2e2e; font-size: 12px; color: #444; }
.panel-bar { height: 25px; flex: none; display: flex; align-items: center; padding: 0 3px; background: linear-gradient(90deg, #484848 0, #4a4a4a 28%, #3d3c3a 32%, #45413d 38%, #303030 42%, #47423e 47%, #4d4e4e 55%, #444244 61%, #333132 64%, #4c4c4c 68%, #4c4c4c); color: #ddd; }
.mouse { width: 20px; height: 20px; }
.grip { width: 4px; height: 9px; margin: 0 3px 0 5px; }
.task { width: 198px; height: 22px; display: flex; align-items: center; gap: 6px; padding: 0 4px; margin-right: 1px; white-space: nowrap; color: #bbb; font-size: 13px; }
.task svg { width: 16px; height: 16px; }
.task-on { background: #25507f; border: 1px solid #3c6ea5; color: #fff; }
.task-idle { color: #999; }
.tray { margin-left: auto; display: flex; align-items: center; gap: 7px; color: #eee; }
.tray time { margin-left: 8px; font-size: 12px; color: #ddd; }

.client { flex: 1; min-height: 0; display: flex; flex-direction: column; background: linear-gradient(#e6e6e6, #cdcdcd 24px); border: 1px solid #8c8c8c; border-top-color: #fff; border-radius: 5px 5px 0 0; }
.client-title { height: 24px; flex: none; display: flex; align-items: center; padding: 0 9px; font-weight: 700; color: #6c6c6c; }
.client-title h2 { flex: 1; text-align: center; padding-right: 0; padding-left: 46px; margin-right: 0; }
.roll { width: 8px; height: 6px; }
.winbtns { width: 54px; height: 12px; }
.client-title h2 { padding: 0 0 0 8px; }
.client-menu { height: 26px; flex: none; display: flex; align-items: center; gap: 21px; padding-left: 12px; }
.connect-row { display: flex; align-items: center; height: 25px; margin: 10px 10px 0; gap: 8px; flex: none; }
.combo { height: 25px; display: flex; align-items: center; border: 1px solid #8a8a8a; border-radius: 3px; background: linear-gradient(#e2e2e2, #cbcbcb); padding: 0 4px; box-shadow: inset 0 1px #eee; }
.combo select { flex: 1; appearance: none; height: 23px; opacity: 1; }
.combo-uri { width: 158px; }
.arrows { width: 8px; height: 14px; color: #444; }
.off { color: #969696 !important; }
.combo.off { border-color: #a6a6a6; background: #c9c9c9; box-shadow: none; }
.off svg { color: #888; }
.btn { width: 83px; height: 25px; border: 1px solid #858585; border-radius: 3px; background: linear-gradient(#e8e8e8, #cfcfcf); }
.btn:disabled { color: #999; border-color: #a6a6a6; background: #cacaca; }
.meters { margin-left: auto; display: flex; align-items: center; gap: 7px; }
.meter { width: 100px; height: 26px; border: 1px solid #333; }
.fill { height: 100%; background: #3399ff; }
.address-row { display: flex; align-items: center; height: 25px; margin: 33px 0 0 26px; gap: 9px; flex: none; }
.spin { height: 25px; display: flex; border: 1px solid #7c7c7c; border-radius: 3px; background: #fcfcfc; color: #222; }
.spin input { flex: 1; padding-left: 4px; }
.spin svg { width: 13px; height: 23px; padding: 3px; border-left: 1px solid #888; background: linear-gradient(#eee, #bbb); color: #333; }
.spin.off, .spin.off svg { background: #dadada; color: #888; }
.spin-addr { width: 138px; }
.check { display: flex; align-items: center; gap: 8px; }
.check input { appearance: none; width: 13px; height: 13px; border: 1px solid #888; border-radius: 3px; background: #fff; margin: 0 0 0 2px; }
.tabs { display: flex; align-items: flex-end; height: 30px; margin: 17px 10px 0; flex: none; }
.tab { height: 27px; padding: 0 8px; border: 1px solid #acacac; border-left-width: 0; border-radius: 3px 3px 0 0; background: #cacaca; line-height: 25px; }
.tab:first-child { border-left-width: 1px; }
.tab-on { height: 30px; background: #d9d9d9; border-color: #999 #999 #d9d9d9; }
.page { flex: 1; min-height: 0; margin: -1px 10px 9px; padding: 12px 10px 0; border: 1px solid #a4a4a4; border-radius: 0 3px 3px 3px; background: #d9d9d9; }
.tab-on { position: relative; }
.page-body { margin: 16px 8px 0; }
.plot { width: 100%; height: auto; font-size: 12px; }
.plot path { fill: none; }
.plot > path:first-child { fill: #fff; }
.plot path[fill-opacity] { fill: #646464; }
.gridline { stroke: #a8a8a8; }
.gridline-strong { stroke: #7c7c7c; }
.axis { stroke: #000; }
.roll-line { stroke: #33c033; }
.pitch-line { stroke: #2f68f0; }
.yaw-line { stroke: #f07ae6; }
.thrust-line { stroke: #ff1414; }
.tick { fill: #000; }
.tick-y { text-anchor: end; }
.tick-x { text-anchor: middle; }
.plot-title { font-size: 14px; }
.axes { display: flex; gap: 7px; margin-top: 6px; }
.axis-group { flex: 1; min-width: 0; border: 0; margin: 0; padding: 0; display: flex; flex-direction: column; gap: 8px; }
.axis-group legend { padding: 0; height: 24px; }
.axis-y { gap: 31px; }
.axis-y .axis-row:first-of-type { margin-top: 22px; }
.axis-row { display: flex; align-items: center; min-height: 20px; }
.axis-row .x-main { width: 393px; }
.axis-row .y-main { width: 87px; }
.axis-row:has(.x-main), .axis-row:has(.y-main) { height: 25px; }
.field { height: 25px; border: 1px solid #999; border-radius: 3px; border-bottom-color: #bbb; padding: 0 4px; }
.grow { flex: 1; }
.dash { width: 19px; text-align: center; }
.radio { width: 86px; display: flex; align-items: center; gap: 9px; }
.radio-y { width: 72px; }
.radio input { appearance: none; width: 13px; height: 13px; margin-left: 3px; border: 1px solid #888; border-radius: 50%; background: #fff; }
.radio.off input { background: none; border-color: #aaa; }
.radio input:checked { background: radial-gradient(circle, #222 0 2px, #fff 3px); }
.update-row { display: flex; justify-content: flex-end; margin-top: 8px; padding-right: 4px; }
.focus { border: 1px dotted #333; padding: 1px 2px; }
.update-row .check { gap: 6px; }
.client-status { height: 22px; flex: none; border-top: 1px solid #b8b8b8; }
.client-status span { display: inline-block; border: 1px solid #f2f2f2; padding: 0 2px; line-height: 18px; }
.vbox-status { height: 22px; flex: none; display: flex; align-items: center; justify-content: flex-end; gap: 5px; padding-right: 1px; color: #222; }
.vbox-status svg { width: 16px; height: 17px; }
.vbox-status span { font-size: 13px; }

.office { flex: 1; min-width: 0; display: flex; flex-direction: column; background: #f1f0ee; }
.toolbar { height: 39px; flex: none; display: flex; align-items: center; border-bottom: 1px solid #d9d7d4; }
.toolbar:first-child { background: linear-gradient(#d5d4d2, #f1f0ee 6px); }
.toolbar > button { width: 31px; height: 33px; margin: 0 1px; display: flex; align-items: center; justify-content: center; flex: none; }
.toolbar > button svg { width: 24px; height: 24px; font-family: "Liberation Sans", sans-serif; }
.toolbar > button svg[viewBox="0 0 24 28"] { height: 28px; }
.toolbar > .on { border: 1px solid #b5b3b0; border-radius: 4px; background: #f8f8f7; }
.handle { width: 12px; height: 9px; flex: none; background: repeating-linear-gradient(#c4c2bf 0 1px, transparent 1px 3px) 3px 0 / 5px 9px no-repeat; }
.toolbar b { width: 17px; flex: none; }
.toolbar b::after { content: ""; display: block; width: 0; margin: auto; border: 3px solid transparent; border-top: 4px solid #000; border-bottom: 0; }
.toolbar .dim::after { border-top-color: #aaa; }
.toolbar s, .formula s { width: 1px; height: 24px; margin: 0 4px 0 3px; background: #d6d4d1; flex: none; }
.cbx { display: flex; flex: none; height: 25px; border: 1px solid #a5a29d; border-radius: 4px; background: #fff; color: #444; }
.cbx input { flex: 1; padding-left: 6px; font-size: 14px; }
.cbx button { width: 21px; border-left: 1px solid #c6c4c0; background: linear-gradient(#fff, #eee); border-radius: 0 3px 3px 0; }
.cbx button::after { content: ""; display: block; width: 0; margin: auto; border: 4px solid transparent; border-top: 7px solid #777; border-bottom: 0; }
.cbx-font { width: 156px; margin: 0 10px 0 1px; font-style: italic; }
.cbx-size { width: 66px; margin-right: 2px; }
.cbx-name { width: 154px; }
.toolbar > .letter { font: 700 22px/26px "Liberation Serif", serif; color: #5b8ccb; -webkit-text-stroke: 1px #2a5ca0; }
.formula { height: 36px; flex: none; display: flex; align-items: center; padding: 0 5px 0 1px; border-bottom: 1px solid #a4a29f; }
.formula > button { width: 33px; color: #000; }
.formula .fx { font: 700 18px/20px "Liberation Serif", serif; }
.fx small { font-size: 12px; font-style: italic; color: #555; }
.formula .sigma { font: 700 25px/24px "Liberation Serif", serif; }
.formula .formula-line { flex: 1; height: 23px; border: 1px solid #a5a29d; border-radius: 3px; background: #fff; margin-left: 2px; }
.formula .expand { width: 11px; height: 23px; margin-left: 4px; border: 1px solid #a5a29d; border-radius: 4px; }
.expand::after { content: ""; display: block; width: 0; margin: auto; border: 2px solid transparent; border-top: 3px solid #333; border-bottom: 0; }

.sheet { flex: 1; min-height: 0; display: flex; border-bottom: 1px solid #8c8c8c; }
.grid { position: relative; flex: 1; min-width: 0; overflow: hidden; background: #fff; }
.grid table { width: 1211px; table-layout: fixed; border-collapse: separate; border-spacing: 0; font: 12px/15px "DejaVu Sans", sans-serif; color: #000; }
.grid th, .grid td { height: 17px; padding: 1px 1px 0 2px; border: solid #bcbcbc; border-width: 0 1px 1px 0; text-align: right; white-space: nowrap; }
.grid th { padding: 1px 0 0; border-color: #8c8c8c; background: #f1f0ee; color: #555; font: 14px/15px "Noto Sans", sans-serif; text-align: center; }
.grid thead th { height: 20px; width: 65px; background: linear-gradient(#f8f7f6 50%, #efeeec 50%); }
.grid thead th:first-child { width: 41px; }
.grid .label { text-align: left; }
.grid .typo { text-decoration: underline wavy #e22 1px; }
.grid thead .current { background: linear-gradient(#f6a98a 50%, #ef7a48 50%); color: #fff; font-weight: 700; }
.grid tbody .current { background: linear-gradient(90deg, #f6a98a 50%, #ef7a48 50%); color: #fff; font-weight: 700; }
.chart { position: absolute; left: 674px; top: 257px; }
.chart-text { font: 700 26px "Liberation Serif", serif; fill: #595959; text-anchor: end; }
.chart-start { text-anchor: start; }
.cursor { position: absolute; left: 624px; top: 375px; width: 68px; height: 20px; border: 3px solid #000; }
.cursor::after { content: ""; position: absolute; right: -6px; bottom: -6px; width: 6px; height: 6px; background: #000; }
.vscroll { width: 13px; flex: none; display: flex; flex-direction: column; font-size: 10px; color: #888; }
.split { height: 5px; border-bottom: 2px solid #222; }
.vscroll button { height: 13px; line-height: 12px; border: 1px solid #c2c0bd; border-radius: 6px; background: #f6f6f5; }
.vtrack { flex: 1; background: #dbd9d6; border: 1px solid #c2c0bd; border-radius: 7px; }
.vthumb { height: 49%; display: flex; align-items: center; justify-content: center; border: 1px solid #a5a29d; border-radius: 7px; background: linear-gradient(90deg, #fff, #eae9e7); }
.sheet-tabs { height: 13px; flex: none; display: flex; font-size: 10px; line-height: 13px; color: #555; }
.tab-nav { width: 54px; display: flex; gap: 2px; padding-left: 2px; }
.tab-nav button { width: 11px; height: 12px; border: 1px solid #aaa; border-radius: 6px; background: #fff; font-size: 7px; line-height: 10px; color: #333; overflow: hidden; }
.tab-list { display: flex; flex: 1; }
.stab { position: relative; height: 12px; padding: 0 5px 0 4px; background: #dcdad7; font-size: 10px; line-height: 11px; }
.stab::after { content: ""; position: absolute; right: 0; top: 0; width: 1px; height: 12px; background: #777; transform: skewX(-25deg); }
.stab-on { background: #fff; font-weight: 700; color: #222; padding: 0 7px; }
.stab-add svg { width: 10px; height: 10px; margin: 0 5px; }
.hscroll { width: 41%; display: flex; border-left: 1px solid #888; padding: 0 19px 0 12px; }
.hscroll button { width: 12px; line-height: 10px; border: 1px solid #c2c0bd; border-radius: 6px; background: #f6f6f5; color: #666; }
.htrack { flex: 1; background: #dbd9d6; border: 1px solid #c2c0bd; border-radius: 7px; }
.hthumb { width: 47%; height: 11px; text-align: center; line-height: 7px; color: #999; border: 1px solid #a5a29d; border-radius: 7px; background: linear-gradient(#fff, #eae9e7); }
.drawbar { border-bottom-color: #b5b3b0; }
.office-status { height: 23px; flex: none; display: flex; align-items: center; color: #444; font-size: 12px; }
.office-status span { height: 18px; line-height: 18px; border-right: 1px solid #d2d0cd; display: flex; align-items: center; flex: none; }
.office-status .st-sheet { width: 275px; padding-left: 10px; }
.office-status .st-style { width: 305px; padding-left: 8px; }
.office-status .st-lang { width: 84px; }
.office-status .st-icon { width: 29px; justify-content: center; }
.st-icon svg { width: 14px; height: 15px; }
.office-status .st-sign { width: 29px; }
.office-status .st-sum { flex: 1; justify-content: center; }
.office-status .st-zoom { width: 143px; justify-content: center; }
.st-zoom svg { width: 126px; height: 12px; }
.office-status .st-pct { width: 48px; border: 0; padding-left: 11px; }
```
FILE: sheet.js
```js
// Fills the spreadsheet grid: arm length L, tilt angle Theta and the constants.
const theta = [30.14779, 14.54357, 9.637306, 7.212983, 5.764878, 4.801582, 4.114361, 3.59934,
  3.198971, 2.878789, 2.61689, 2.398682, 2.214073, 2.055854, 1.918744, 1.798782, 1.692939,
  1.598862, 1.514691, 1.43894, 1.370406, 1.308104, 1.25122, 1.199078, 1.151109, 1.10683,
  1.065831, 1.027762, 0.992318, 0.959238, 0.928292, 0.89928, 0.872027, 0.846377, 0.822193,
  0.799353, 0.777748, 0.757279, 0.737861, 0.719413, 0.701866, 0.685154];
const columns = [...'ABCDEFGHIJKLMNOPQR'];
const rows = [['L', 'Theta', 'T1', 'l', 'm', 'M', 'g']];
theta.forEach((t, i) => rows.push([(i + 1) / 100, t, 0.05625, 0.035, 0.004, 0.032, 9.8]));
rows.push([0.92], [1.42], [], []);

const cell = (tag, text, cls) => {
  const el = document.createElement(tag);
  if (text !== undefined) el.textContent = text;
  if (cls) el.className = cls;
  return el;
};

const head = document.createElement('tr');
head.append(cell('th'), ...columns.map(c => cell('th', c, c === 'J' ? 'current' : '')));
document.querySelector('.grid thead').append(head);

const body = document.querySelector('.grid tbody');
rows.forEach((values, r) => {
  const tr = document.createElement('tr');
  tr.append(cell('th', r + 1, r === 21 ? 'current' : ''));
  columns.forEach((_, c) => {
    const td = cell('td', r ? values[c] : undefined, r ? '' : 'label');
    if (!r && values[c]) td.append(cell('span', values[c], values[c] === 'm' ? 'typo' : ''));
    tr.append(td);
  });
  body.append(tr);
});
```
